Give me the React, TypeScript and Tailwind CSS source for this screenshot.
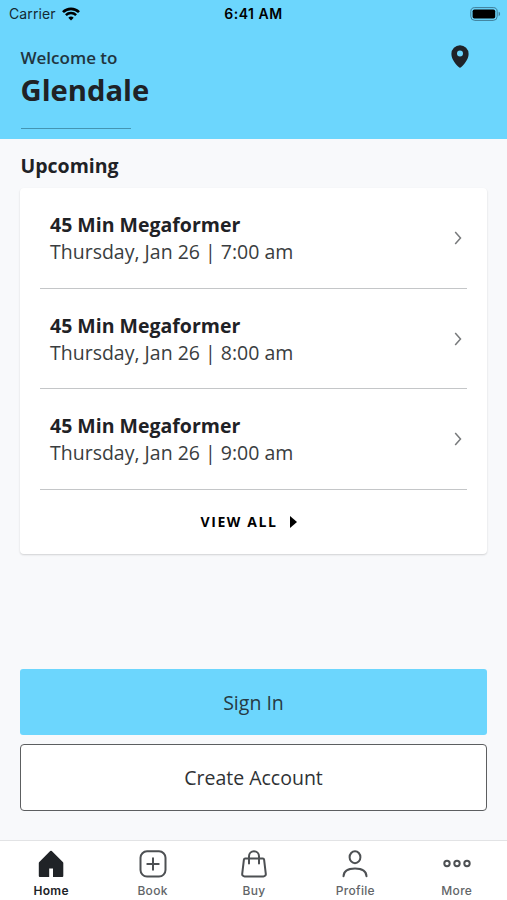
import React from "react";

type IconProps = { className?: string };

const WifiIcon: React.FC<IconProps> = ({ className }) => (
  <svg viewBox="0 0 18 14" className={className} fill="none" stroke="black">
    <path d="M1 5.1a11.4 11.4 0 0 1 16 0" strokeWidth="2.7" />
    <path d="M3.9 8.2a7.2 7.2 0 0 1 10.2 0" strokeWidth="2.5" />
    <path d="M9 13.5 6.3 10.7a3.9 3.9 0 0 1 5.4 0z" fill="black" stroke="none" />
  </svg>
);

const BatteryIcon: React.FC<IconProps> = ({ className }) => (
  <svg viewBox="0 0 31 14" className={className}>
    <rect x="0.8" y="0.6" width="26.4" height="12.8" rx="4" fill="none" stroke="#3f7d98" />
    <rect x="2.6" y="2.4" width="22.6" height="9.2" rx="1.8" fill="black" />
    <path d="M28.7 4.8c1.8.6 1.8 3.8 0 4.4z" fill="#3f7d98" />
  </svg>
);

const PinIcon: React.FC<IconProps> = ({ className }) => (
  <svg viewBox="0 0 18 23" className={className} fill="#1f2329">
    <path
      fillRule="evenodd"
      d="M9 .3A8.6 8.6 0 0 0 .4 8.9c0 5.4 4.6 10.3 7.3 13.2a1.8 1.8 0 0 0 2.6 0c2.7-2.9 7.3-7.8 7.3-13.2A8.6 8.6 0 0 0 9 .3zm0 5.3a3 3 0 1 1 0 6 3 3 0 0 1 0-6z"
    />
  </svg>
);

const ChevronIcon: React.FC<IconProps> = ({ className }) => (
  <svg viewBox="0 0 8 14" className={className} fill="none" stroke="#77797b" strokeWidth="1.5">
    <path d="M1.2 1 6.5 7l-5.3 6" />
  </svg>
);

const HomeIcon: React.FC<IconProps> = ({ className }) => (
  <svg viewBox="0 0 28 28" className={className} fill="#202327">
    <path d="M14 .7a1 1 0 0 1 .8.3l11 11a1.5 1.5 0 0 1 .5 1.1V26a1 1 0 0 1-1 1H16v-8.6h-3.8V27H2.8a1 1 0 0 1-1-1V13.1a1.5 1.5 0 0 1 .5-1.1L13.2 1a1 1 0 0 1 .8-.3z" />
  </svg>
);

const BookIcon: React.FC<IconProps> = ({ className }) => (
  <svg viewBox="0 0 28 28" className={className} fill="none" stroke="#4d5053" strokeWidth="2">
    <rect x="1.5" y="1.3" width="25" height="25.2" rx="6.5" />
    <path d="M14 8.3v11.4M8.3 14h11.4" strokeLinecap="round" />
  </svg>
);

const BuyIcon: React.FC<IconProps> = ({ className }) => (
  <svg
    viewBox="0 0 28 28"
    className={className}
    fill="none"
    stroke="#4d5053"
    strokeWidth="2"
    strokeLinecap="round"
    strokeLinejoin="round"
  >
    <path d="M5.2 8.5h17.6a1.3 1.3 0 0 1 1.3 1.1l1.7 14.2a2.4 2.4 0 0 1-2.4 2.7H4.6a2.4 2.4 0 0 1-2.4-2.7L3.9 9.6a1.3 1.3 0 0 1 1.3-1.1z" />
    <path d="M9 13.5V6.3a5 5 0 0 1 10 0v7.2" />
  </svg>
);

const ProfileIcon: React.FC<IconProps> = ({ className }) => (
  <svg
    viewBox="0 0 28 28"
    className={className}
    fill="none"
    stroke="#4d5053"
    strokeWidth="2"
    strokeLinecap="round"
  >
    <ellipse cx="14" cy="7.2" rx="5.4" ry="6" />
    <path d="M2.5 26.3C2.7 21.5 7 18.6 14 18.6s11.3 2.9 11.5 7.7" />
  </svg>
);

const MoreIcon: React.FC<IconProps> = ({ className }) => (
  <svg viewBox="0 0 28 28" className={className} fill="none" stroke="#4d5053" strokeWidth="2">
    <circle cx="4" cy="13.5" r="2.7" />
    <circle cx="14" cy="13.5" r="2.7" />
    <circle cx="24" cy="13.5" r="2.7" />
  </svg>
);

const classes = [
  { name: "45 Min Megaformer", time: "Thursday, Jan 26 | 7:00 am" },
  { name: "45 Min Megaformer", time: "Thursday, Jan 26 | 8:00 am" },
  { name: "45 Min Megaformer", time: "Thursday, Jan 26 | 9:00 am" },
];

const tabs = [
  { label: "Home", Icon: HomeIcon, active: true },
  { label: "Book", Icon: BookIcon },
  { label: "Buy", Icon: BuyIcon },
  { label: "Profile", Icon: ProfileIcon },
  { label: "More", Icon: MoreIcon },
];

const App: React.FC = () => {
  return (
    <div className="flex h-[900px] w-[507px] flex-col overflow-hidden bg-[#f8f9fb] font-['Open_Sans',sans-serif] text-[#1f2226]">
      {/* Header */}
      <header className="h-[139px] shrink-0 bg-[#6cd6fd]">
        <div className="grid h-[27px] grid-cols-3 items-center pr-[6px] pl-[9px] font-['Inter',sans-serif] text-sm text-black">
          <div className="flex items-center gap-[6px]">
            <span className="tracking-[0.1px] text-[#142a33]">Carrier</span>
            <WifiIcon className="h-[14px] w-[18px]" />
          </div>
          <span className="pr-[3px] text-center font-semibold tracking-[0.5px]">6:41 AM</span>
          <BatteryIcon className="h-[14px] w-[31px] justify-self-end" />
        </div>
        <div className="flex justify-between pr-[38px] pl-[20.5px]">
          <div>
            <p className="mt-[19px] text-[17px] leading-6 font-semibold text-[#21353f]">
              Welcome to
            </p>
            <h1 className="text-[29.2px] leading-10 font-bold">Glendale</h1>
            <div className="mt-[18px] h-px w-[110px] bg-[#4495b3]" />
          </div>
          <PinIcon className="mt-[18px] h-[23px] w-[18px]" />
        </div>
      </header>

      {/* Upcoming classes */}
      <main className="flex flex-1 flex-col px-5">
        <h2 className="mt-[13px] pl-[0.5px] text-[19.5px] leading-7 font-bold">Upcoming</h2>
        <section className="mt-2 h-[366px] rounded bg-white px-5 shadow-[0_1px_2px_rgba(0,0,0,0.16)]">
          {classes.map((item) => (
            <div
              key={item.time}
              className="flex h-[100.7px] items-center justify-between border-b border-[#c4c6c8] px-[10px]"
            >
              <div className="leading-[27px]">
                <h3 className="text-[19.5px] font-bold">{item.name}</h3>
                <p className="text-[19.5px] text-[#3a3d40]">{item.time}</p>
              </div>
              <ChevronIcon className="mr-[-5px] h-[14px] w-2" />
            </div>
          ))}
          <button className="flex h-16 w-full items-center justify-center gap-3 pr-[10px] text-sm font-bold tracking-[1.6px] text-black">
            VIEW ALL
            <svg viewBox="0 0 7 12" className="h-3 w-[7px]">
              <path d="M0 0l7 6-7 6z" />
            </svg>
          </button>
        </section>

        {/* Account actions */}
        <div className="mt-auto mb-[29px] flex flex-col gap-[9px]">
          <button className="h-[66px] rounded-[3px] bg-[#6cd6fd] pt-px text-[19.5px] text-[#263a44]">
            Sign In
          </button>
          <button className="h-[67px] rounded border-[1.5px] border-[#5c5e60] bg-white pt-px text-[19.5px] text-[#2f3235]">
            Create Account
          </button>
        </div>
      </main>

      {/* Tab bar */}
      <nav className="grid h-[60px] shrink-0 grid-cols-5 border-t border-[#e2e3e5] bg-white font-['Inter',sans-serif]">
        {tabs.map(({ label, Icon, active }) => (
          <button key={label} className="flex flex-col items-center pt-[9px] pl-px">
            <Icon className="h-7 w-7" />
            <span
              className={
                active
                  ? "mt-[5px] text-xs leading-4 font-semibold tracking-[0.3px] text-[#202327]"
                  : "mt-[5px] text-xs leading-4 font-medium tracking-[0.3px] text-[#626568]"
              }
            >
              {label}
            </span>
          </button>
        ))}
      </nav>
    </div>
  );
};

export default App;
